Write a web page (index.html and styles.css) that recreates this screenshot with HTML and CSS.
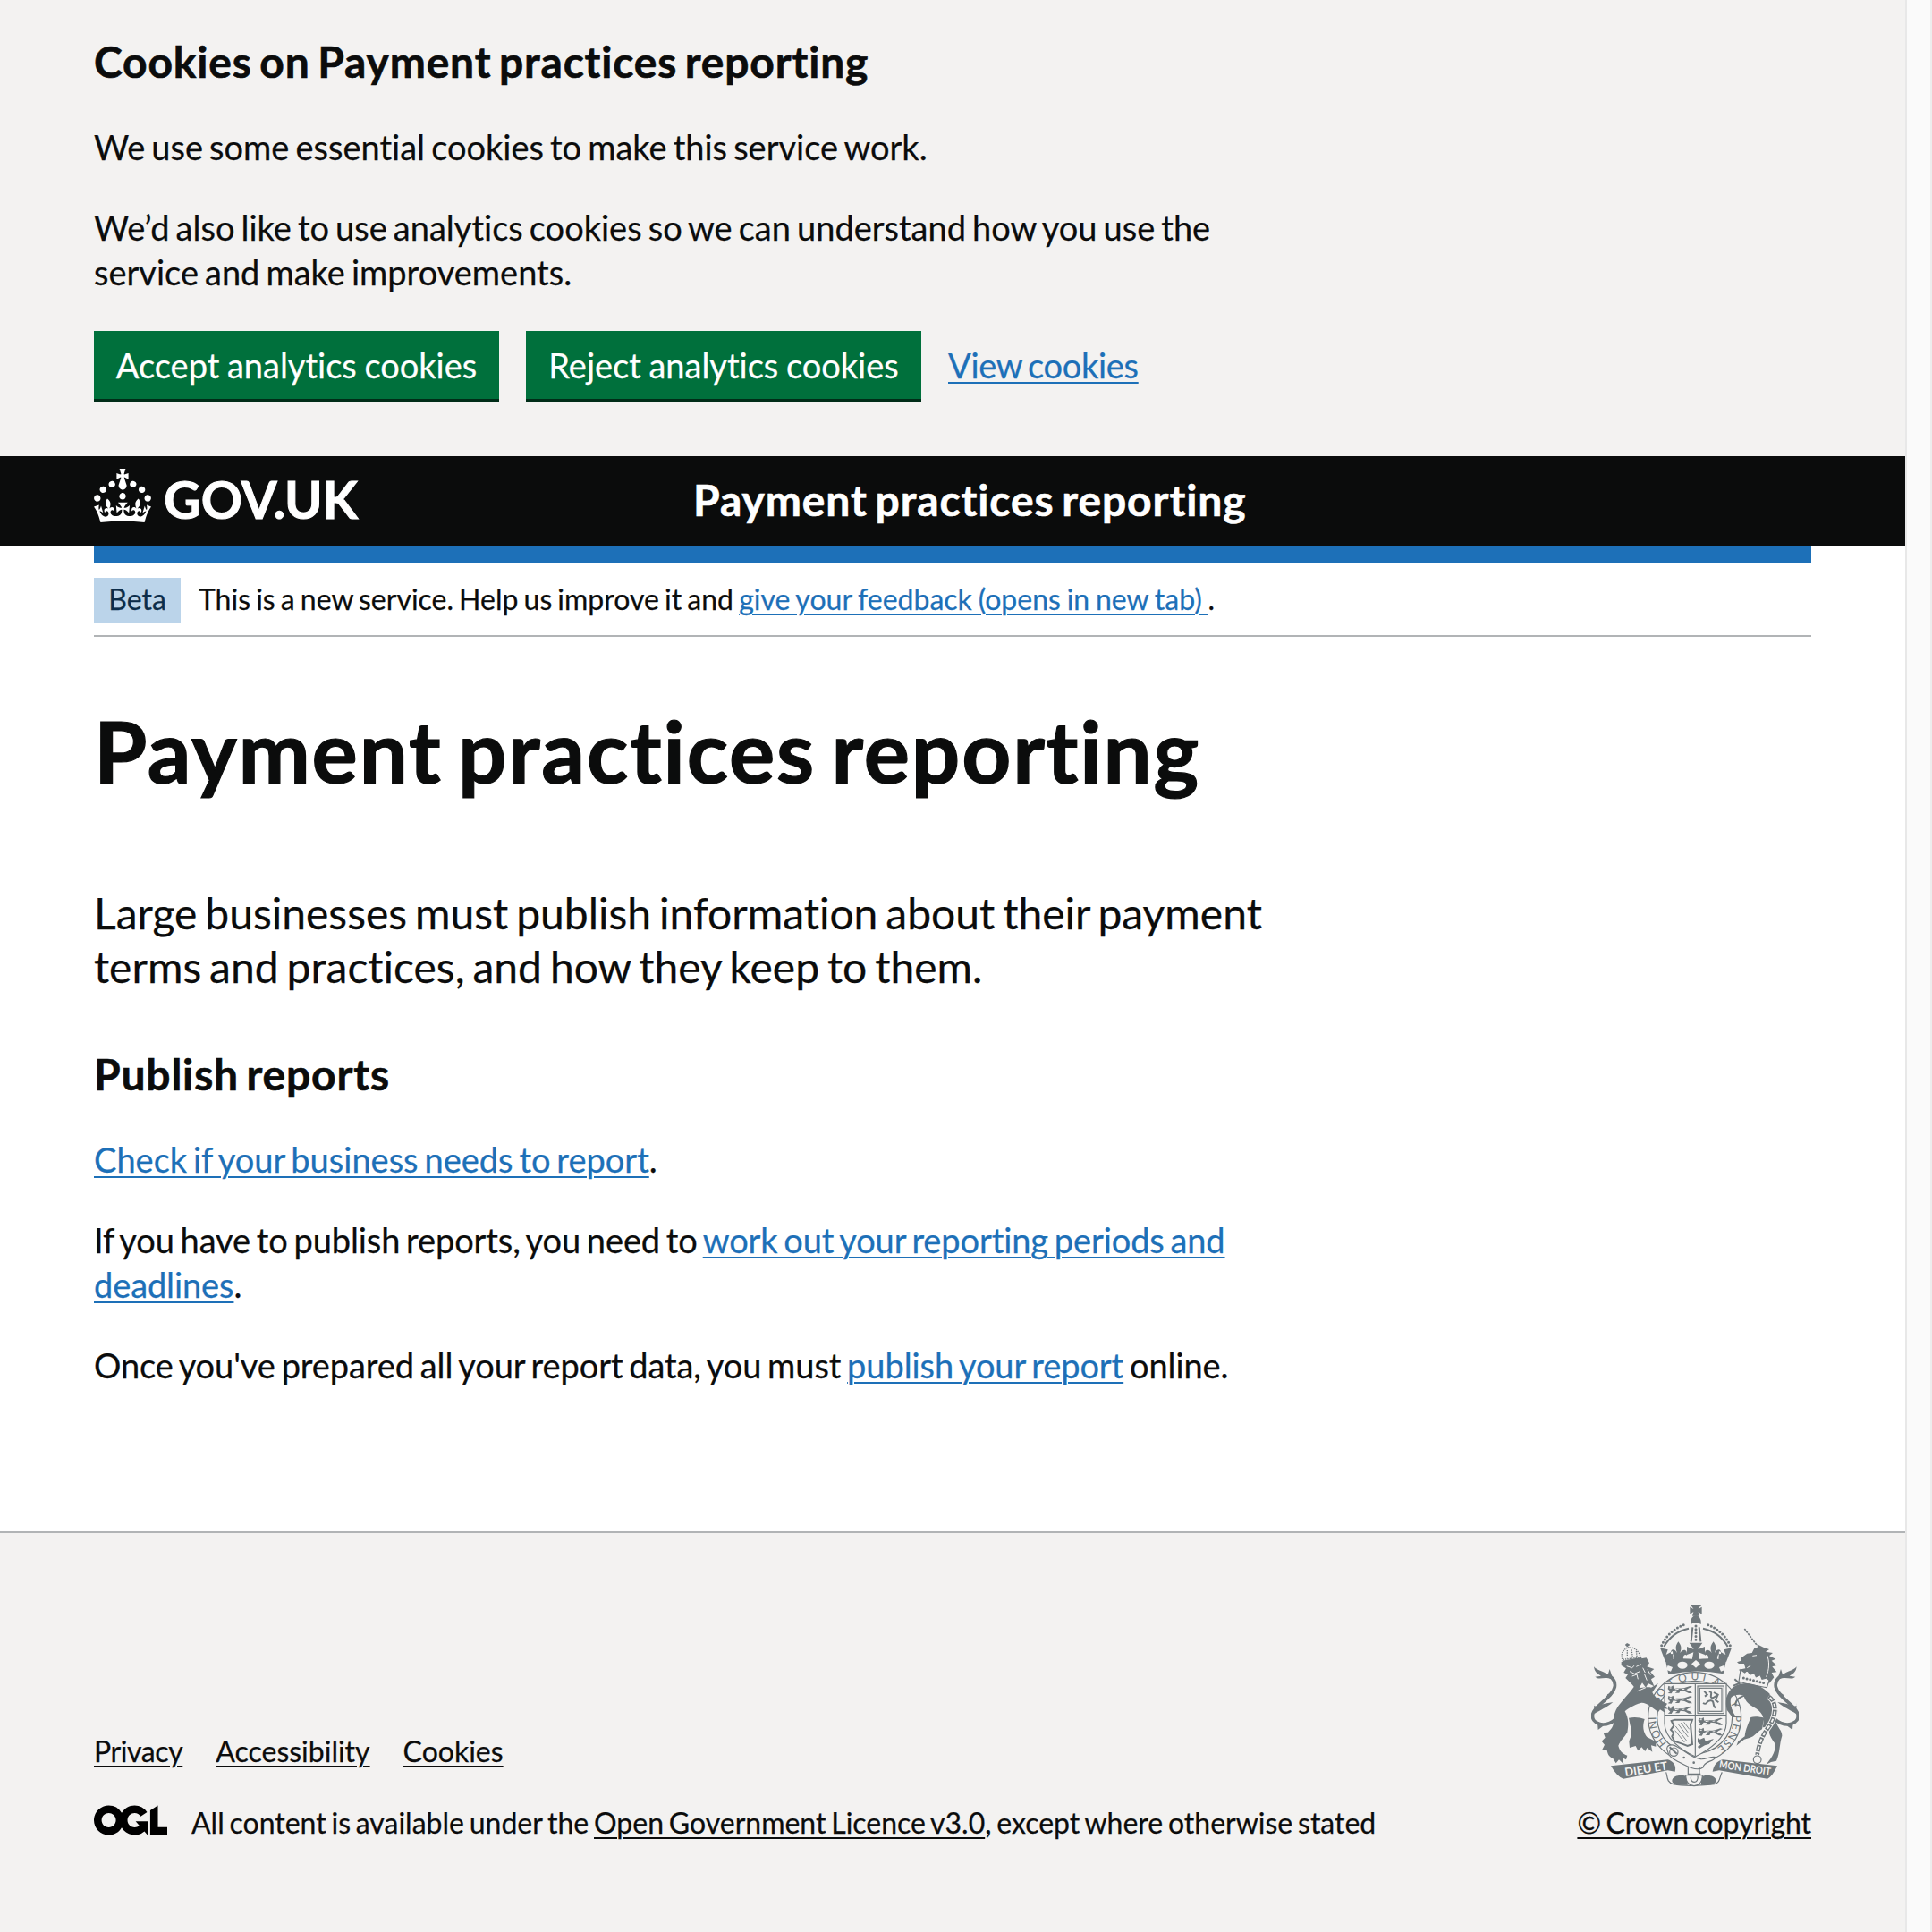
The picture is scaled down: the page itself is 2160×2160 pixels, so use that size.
FILE: index.html
```html
<!DOCTYPE html>
<html lang="en">
<head>
<meta charset="utf-8">
<title>Payment practices reporting</title>
<link rel="stylesheet" href="styles.css">
</head>
<body>
<div class="page">
  <section class="cookie-banner">
    <div class="container">
      <h2 class="heading-m">Cookies on Payment practices reporting</h2>
      <p class="body t-essential">We use some essential cookies to make this service work.</p>
      <p class="body t-analytics">We’d also like to use analytics cookies so we can understand how you use the service and make improvements.</p>
      <div class="button-group">
        <button class="button accept">Accept analytics cookies</button>
        <button class="button reject">Reject analytics cookies</button>
        <a class="link view" href="#">View cookies</a>
      </div>
    </div>
  </section>

  <header class="header">
    <div class="container header-row">
      <a class="logo" href="#">
        <svg class="crown" viewBox="0 0 32 30"><path d="M22.6 10.4c-1 .4-2-.1-2.4-1-.4-.9.1-2 1-2.4.9-.4 2 .1 2.4 1s-.1 2-1 2.4m-5.9 6.7c-.9.4-2-.1-2.4-1-.4-.9.1-2 1-2.4.9-.4 2 .1 2.4 1s-.1 2-1 2.4m10.8-3.7c-1 .4-2-.1-2.4-1-.4-.9.1-2 1-2.4.9-.4 2 .1 2.4 1s0 2-1 2.4m3.3 4.8c-1 .4-2-.1-2.4-1-.4-.9.1-2 1-2.4.9-.4 2 .1 2.4 1s-.1 2-1 2.4M17 4.7l2.3 1.2V2.5l-2.3.7-.2-.2.9-3h-3.4l.9 3-.2.2c-.1.1-2.3-.7-2.3-.7v3.4L15 4.7c.1.1.1.2.2.2l-1.3 4c-.1.2-.1.4-.1.6 0 1.1.8 2 1.9 2.2h.7c1-.2 1.9-1.1 1.9-2.1 0-.2 0-.4-.1-.6l-1.3-4c-.1-.2 0-.2.1-.3m-7.6 5.7c.9.4 2-.1 2.4-1 .4-.9-.1-2-1-2.4-.9-.4-2 .1-2.4 1s0 2 1 2.4m-5 3c.9.4 2-.1 2.4-1 .4-.9-.1-2-1-2.4-.9-.4-2 .1-2.4 1s.1 2 1 2.4m-3.2 4.8c.9.4 2-.1 2.4-1 .4-.9-.1-2-1-2.4-.9-.4-2 .1-2.4 1s0 2 1 2.4m14.8 11c4.4 0 8.6.3 12.3.8 1.1-4.5 2.4-7 3.7-8.8l-2.5-.9c.2 1.3.3 1.9 0 2.7-.4-.4-.8-1.1-1.1-2.3l-1.2 4c.7-.5 1.3-.8 2-.9-1.1 2.5-2.6 3.1-3.5 3-1.1-.2-1.7-1.2-1.5-2.1.3-1.2 1.5-1.5 2.1-.1 1.1-2.3-.8-3-2-2.3 1.9-1.9 2.1-3.5.6-5.6-2.1 1.6-2.1 3.2-1.2 5.5-1.2-1.4-3.2-.6-2.5 1.6.9-1.4 2.1-.5 1.9.8-.2 1.1-1.7 2.1-3.5 1.9-2.7-.2-2.9-2.1-2.9-3.6.7-.1 1.9.5 2.9 1.9l.4-4.3c-1.1 1.1-2.1 1.4-3.2 1.4.4-1.2 2.1-3 2.1-3h-5.4s1.7 1.9 2.1 3c-1.1 0-2.1-.2-3.2-1.4l.4 4.3c1-1.4 2.2-2 2.9-1.9-.1 1.5-.2 3.4-2.9 3.6-1.9.2-3.4-.8-3.5-1.9-.2-1.3 1-2.2 1.9-.8.7-2.3-1.2-3-2.5-1.6.9-2.2.9-3.9-1.2-5.5-1.5 2-1.3 3.7.6 5.6-1.2-.7-3.1 0-2 2.3.6-1.4 1.8-1.1 2.1.1.2.9-.3 1.9-1.5 2.1-.9.2-2.4-.5-3.5-3 .6 0 1.2.3 2 .9l-1.2-4c-.3 1.1-.7 1.9-1.1 2.3-.3-.8-.2-1.4 0-2.7l-2.9.9C1.3 23 2.6 25.5 3.7 30c3.7-.5 7.9-.8 12.3-.8"/></svg>
        <svg class="wordmark" viewBox="0 0 220 72"><text x="-1" y="56" textLength="217" lengthAdjust="spacingAndGlyphs">GOV.UK</text></svg>
      </a>
      <a class="service-name" href="#">Payment practices reporting</a>
    </div>
  </header>

  <div class="container">
    <div class="blue-bar"></div>
    <div class="phase-banner">
      <strong class="tag">Beta</strong>
      <span class="phase-text">This is a new service. Help us improve it and <a class="link" href="#">give your feedback (opens in new tab)&nbsp;</a>.</span>
    </div>
    <main class="main">
      <h1 class="heading-xl">Payment practices reporting</h1>
      <p class="lead">Large businesses must publish information about their payment terms and practices, and how they keep to them.</p>
      <h2 class="heading-m publish">Publish reports</h2>
      <p class="body t-check"><a class="link" href="#">Check if your business needs to report</a>.</p>
      <p class="body t-periods">If you have to publish reports, you need to <a class="link" href="#">work out your reporting periods and deadlines</a>.</p>
      <p class="body t-online">Once you've prepared all your report data, you must <a class="link" href="#">publish your report</a> online.</p>
    </main>
  </div>

  <footer class="footer">
    <div class="container footer-row">
      <div class="footer-main">
        <nav class="footer-links">
          <a class="privacy" href="#">Privacy</a>
          <a href="#">Accessibility</a>
          <a href="#">Cookies</a>
        </nav>
        <div class="licence">
          <svg class="ogl" viewBox="0 0 483.2 195.7"><path d="M421.5 142.8V.1l-50.7 32.3v161.1h112.4v-50.7zm-122.3-9.6A47.12 47.12 0 0 1 221 97.8c0-26 21.1-47.1 47.1-47.1 16.7 0 31.4 8.7 39.7 21.8l42.7-27.2A97.63 97.63 0 0 0 268.1 0c-36.5 0-68.3 20.1-85.1 49.7A98 98 0 0 0 97.8 0C43.9 0 0 43.9 0 97.8s43.9 97.8 97.8 97.8c36.5 0 68.3-20.1 85.1-49.7a97.76 97.76 0 0 0 149.6 25.4l19.4 22.2h3v-87.8h-80l24.3 27.5zM97.8 145c-26 0-47.1-21.1-47.1-47.1s21.1-47.1 47.1-47.1 47.1 21.1 47.1 47.1S123.8 145 97.8 145"/></svg>
          <span class="licence-text">All content is available under the <a href="#">Open Government Licence v3.0</a>, except where otherwise stated</span>
        </div>
      </div>
      <div class="copyright">
        <svg class="arms" viewBox="117 72 696 612">
          <defs>
            <g id="half-crown">
              <path class="beads" d="M353 209Q376 158 437 136"/>
              <path class="line6" d="M361 213Q388 164 444 152M457 148L452 196"/>
              <path d="M348 217L374 223L368 240L390 228L392 254L366 264ZM409 196C396 214 402 224 405 234C394 216 382 222 384 238C393 234 397 244 396 258H426C424 242 430 236 438 242C440 222 426 218 415 234C419 222 422 212 409 196Z"/>
            </g>
            <g id="tail">
              <path class="line12" d="M200 456C160 490 116 470 122 440C126 412 188 385 196 348C200 322 180 308 160 308"/>
              <path d="M126 280C138 296 165 292 186 322C160 312 144 326 130 314L150 311C134 302 128 296 126 280ZM179 288L190 322L172 310ZM126 402C124 424 140 406 190 399C168 418 150 424 128 438ZM140 492L138 466L164 474ZM172 372L192 368L166 394Z"/>
            </g>
            <g id="passant">
              <path d="M6 2L14 6L22 1L24 12C36 9 50 12 60 9L78 3L86 5L72 11L66 16L78 20L86 27H74L60 20L46 18L42 26H28L36 20L22 18L16 28L4 27L12 21L4 13Z"/>
              <path class="cut" d="M10 9H16M28 15L40 13M52 14L60 13"/>
            </g>
            <path id="garter" d="M464 575A130 125 0 0 1 464 325A130 125 0 0 1 464 575"/>
          </defs>

          <path d="M450 72H486L476 87L488 80V104L476 96L480 110H456L460 96L448 104V80L460 87Z"/>
          <path d="M451 138C448 118 460 108 468 108C476 108 488 118 485 138L474 132H462Z"/>
          <use href="#half-crown"/>
          <use href="#half-crown" transform="translate(936 0) scale(-1 1)"/>
          <path class="beads" d="M468 144V196"/>
          <path d="M446 200H490L475 222L498 213V240L476 232L482 262H454L460 232L438 240V213L461 222Z"/>
          <path d="M366 258Q416 248 468 256Q520 248 570 258L560 304Q468 286 376 306Z"/>
          <path class="paper" d="M406 275a17 12 0 1 0 34 0a17 12 0 1 0 -34 0M496 275a17 12 0 1 0 34 0a17 12 0 1 0 -34 0M468 258L483 271L468 284L453 271ZM374 276L390 282L384 296L368 290ZM562 276L546 282L552 296L568 290Z"/>

          <ellipse class="paper ring" cx="464" cy="450" rx="156" ry="151"/>
          <ellipse class="thin" cx="464" cy="450" rx="126" ry="122"/>
          <g class="motto">
            <text><textPath href="#garter" startOffset="104" textLength="98">HONI</textPath></text>
            <text><textPath href="#garter" startOffset="248">SO</textPath></text>
            <text><textPath href="#garter" startOffset="314">T</textPath></text>
            <text><textPath href="#garter" startOffset="348" textLength="88">QUI</textPath></text>
            <text><textPath href="#garter" startOffset="458">A</textPath></text>
            <text><textPath href="#garter" startOffset="548">Y</textPath></text>
            <text><textPath href="#garter" startOffset="594" textLength="128">PENSE</textPath></text>
          </g>

          <path class="paper thin" d="M363 337H570V470C570 520 510 560 466 582C420 560 363 520 363 470Z"/>
          <path class="thin" d="M466 337V580M363 443H570"/>
          <use href="#passant" x="370" y="342"/>
          <use href="#passant" x="370" y="376"/>
          <use href="#passant" x="370" y="410"/>
          <use href="#passant" x="472" y="449"/>
          <use href="#passant" x="472" y="484"/>
          <path d="M474 520L482 524L496 518L500 530L528 522L512 540L498 544L478 556L474 548L484 542L474 534Z"/>
          <rect class="thin" x="474" y="345" width="88" height="92"/>
          <rect class="thin" x="481" y="352" width="74" height="78"/>
          <path class="line6" d="M496 362L506 374L498 380M512 364C530 362 508 388 526 384L540 376M492 402C510 412 500 390 520 394C532 396 522 412 534 418M528 366L542 374L534 392L544 400"/>
          <path class="line6" d="M386 462L398 458H456L450 474L456 540L440 546L420 538L396 530L388 514L394 502L384 492L394 478Z"/>
          <path class="hair" d="M400 480L438 530M408 472L442 516M418 468L444 504M428 466L446 490M398 494L430 534"/>

          <path class="paper thin" d="M372 560C366 542 390 538 404 548C430 560 450 586 484 590C500 592 520 580 534 584C526 600 496 596 492 618C470 634 430 610 404 596C388 588 376 580 372 560Z"/>
          <circle class="thin" cx="394" cy="566" r="14"/>
          <path class="line6" d="M380 550L404 572"/>
          <path d="M424 585a4 4 0 1 0 8 0a4 4 0 1 0 -8 0M457 602a4 4 0 1 0 8 0a4 4 0 1 0 -8 0"/>

          <path d="M262 345C280 358 300 345 318 350L342 336L322 366C330 385 350 395 372 404L366 414L374 422L360 420L366 436L348 424L342 432C320 418 300 398 283 402C262 408 240 420 230 430C244 455 242 480 238 500C230 515 214 528 208 545C212 562 222 572 238 578L234 592L222 586L226 607L210 592L200 604L190 588C176 582 172 572 170 560L154 558L162 542L152 530L164 518L158 502L174 500C184 490 192 480 192 466C190 450 196 430 208 412C225 388 245 370 262 345Z"/>
          <path d="M243 452C262 448 280 450 296 456C288 480 292 500 304 516L334 532V548L318 544L322 566L304 552L298 564L286 550L274 562L266 546L246 552L244 530C254 510 254 490 248 478Z"/>
          <path d="M218 264L302 250L312 268L304 280L328 288L316 298L330 314L318 322L328 346L308 336L300 350L288 334L272 362L254 340L232 318L240 306L226 300L234 286L218 276Z"/>
          <path class="cut" d="M236 278L254 284L262 276M268 280L284 272M246 296L262 304L280 296M254 312L270 306L274 322M290 284L298 300M296 306L304 326M306 290L316 308M272 362L300 350"/>
          <path class="dotted" d="M224 262C212 236 226 222 240 216C256 212 280 224 284 256M224 256L284 248M238 250V222M256 248L252 222M270 246L268 224"/>
          <path class="line6" d="M238 202V214M232 207H245M222 263L286 251"/>
          <use href="#tail"/>
          <use href="#tail" transform="translate(932 0) scale(-1 1)"/>

          <path class="horn" d="M631 153L674 210"/>
          <path d="M606 265L620 260L618 252L640 236L656 234L664 218L678 214L672 204L696 216L714 222L702 230L726 234L714 244L736 254L722 260L739 276L724 280L739 298L722 300L730 316L714 336L690 320L668 318L620 300L612 290L634 286L630 270L612 270Z"/>
          <path class="cut" d="M658 244L672 242M706 240C716 262 714 290 704 314M640 284L652 276"/>
          <path class="paper thin" d="M618 290L632 300L640 292L650 306L664 302L670 314L684 308L690 322L706 318L714 326L706 350C672 344 640 340 612 330Z"/>
          <path class="beads" d="M628 318L700 336"/>
          <path class="line6" d="M598 322L614 336L594 344"/>
          <path d="M594 348C630 328 655 338 680 345C712 360 742 395 742 430C732 450 722 470 706 482L692 484C702 452 690 430 660 415C640 404 632 390 628 376C612 372 595 374 586 384C582 400 584 420 600 445L592 452L572 425C566 400 568 368 594 348Z"/>
          <path class="line6" d="M640 374C620 380 598 388 602 412"/>
          <path d="M652 450C664 446 684 448 697 452L690 490C672 500 664 515 650 518L630 524L604 545L610 530L632 514C634 490 645 470 652 450Z"/>
          <path d="M736 440C730 480 758 488 757 512C748 540 750 570 738 596L720 600L704 608C726 580 738 560 732 536C714 510 708 500 720 470Z"/>
          <path class="chain-back" d="M712 380C744 400 736 450 712 482C692 510 678 540 674 576"/>
          <path class="chain" d="M712 380C744 400 736 450 712 482C692 510 678 540 674 576"/>
          <path class="chain-hole" d="M712 380C744 400 736 450 712 482C692 510 678 540 674 576"/>
          <circle class="thin ring-end" cx="674" cy="592" r="13"/>

          <path d="M183 613L374 592C392 598 404 612 398 632L374 628L225 656Q204 650 183 613Z"/>
          <path d="M741 613L558 592C536 598 528 612 524 632L546 628L708 656Q724 650 741 613Z"/>
          <path class="thin" d="M368 634C374 650 368 666 392 674Q440 684 530 674C552 668 546 650 556 634M442 616V640M480 618V640M440 640H484"/>
          <path d="M388 664C388 640 436 640 440 652V677C410 678 392 678 388 664ZM536 664C536 640 490 640 486 652V677C514 678 530 678 536 664Z"/>
          <path class="paper thin" d="M434 644H490C490 692 434 692 434 644Z"/>
          <path class="thin" d="M452 646C444 674 480 674 474 646"/>
          <text class="scroll-text" transform="translate(232 648) rotate(-9)" textLength="144" lengthAdjust="spacingAndGlyphs">DIEU ET</text>
          <text class="scroll-text small" transform="translate(545 619) rotate(8.5)" textLength="174" lengthAdjust="spacingAndGlyphs">MON DROIT</text>
        </svg>
        <a class="crown-copyright" href="#">© Crown copyright</a>
      </div>
    </div>
  </footer>
</div>
<div class="scrollbar"></div>
</body>
</html>
```

FILE: styles.css
```css
* { box-sizing: border-box; }

body {
  margin: 0;
  display: flex;
  height: 2160px;
  overflow: hidden;
  font-family: Lato, "Noto Sans", sans-serif;
  font-size: 38px;
  line-height: 50px;
  color: #0b0c0c;
  background: #fff;
  font-variant-ligatures: none;
  -webkit-text-stroke: 0.25px currentColor;
}

h1, h2, p { margin: 0; }

.page {
  width: 2130px;
  flex: none;
  display: flex;
  flex-direction: column;
}

.scrollbar {
  flex: 1;
  background: #fafafa;
  border-left: 2px solid #e8e8e8;
  border-right: 2px solid #ededed;
}

.container { width: 1920px; margin: 0 auto; }

.cookie-banner {
  height: 510px;
  flex: none;
  padding-top: 39px;
  background: #f3f2f1;
}

.heading-m {
  font-size: 48px;
  line-height: 60px;
  font-weight: 700;
  letter-spacing: 0.017em;
  word-spacing: -0.08em;
  -webkit-text-stroke-width: 0.6px;
  margin-bottom: 40px;
}

.body { margin-bottom: 40px; max-width: 1320px; word-spacing: -0.075em; }
.t-essential { word-spacing: -0.07em; }
.t-analytics { max-width: 1290px; word-spacing: -0.07em; }
.t-periods { letter-spacing: -0.1px; }
.t-online { letter-spacing: -0.08px; }

.link {
  color: #1d70b8;
  text-decoration: underline;
  text-decoration-thickness: 2px;
  text-underline-offset: 4px;
}

.button-group {
  display: flex;
  align-items: flex-start;
  gap: 30px;
  padding-top: 1px;
}

.button {
  height: 80px;
  padding: 0 0 4px;
  border: 0;
  box-shadow: inset 0 -4px 0 #002d18;
  background: #00703c;
  color: #fff;
  font: inherit;
  text-align: center;
  word-spacing: -0.03em;
  font-variant-ligatures: none;
  -webkit-text-stroke: inherit;
}

.accept { width: 453px; }
.reject { width: 442px; }
.view { line-height: 76px; word-spacing: -0.08em; letter-spacing: -0.3px; }

.header { height: 100px; flex: none; background: #0b0c0c; }
.header-row { display: flex; height: 100px; }
.logo { display: flex; align-items: flex-start; width: 670px; padding-top: 14px; }
.crown { width: 64px; height: 60px; fill: #fff; }
.wordmark { width: 220px; height: 72px; margin-left: 15px; overflow: visible; }
.wordmark text { font-family: Lato, sans-serif; font-weight: 700; font-size: 58px; fill: #fff; stroke: #fff; stroke-width: 1; }

.service-name {
  color: #fff;
  text-decoration: none;
  font-size: 48px;
  font-weight: 700;
  line-height: 98px;
  letter-spacing: 0.019em;
  word-spacing: -0.08em;
  -webkit-text-stroke-width: 0.6px;
}

.blue-bar { height: 20px; background: #1d70b8; }

.phase-banner {
  display: flex;
  align-items: flex-start;
  gap: 20px;
  height: 82px;
  padding-top: 16px;
  border-bottom: 2px solid #b1b4b6;
  font-size: 32px;
  line-height: 48px;
}

.phase-text { word-spacing: -0.065em; }
.phase-text .link { word-spacing: -0.045em; }

.tag {
  width: 97px;
  height: 50px;
  background: #bbd4ea;
  color: #0c2d4a;
  font-weight: 400;
  text-align: center;
}

.main { padding-top: 77px; height: 1000px; }

.heading-xl {
  font-size: 96px;
  line-height: 100px;
  font-weight: 700;
  letter-spacing: 0.019em;
  word-spacing: -0.08em;
  -webkit-text-stroke-width: 1.2px;
  margin-bottom: 102px;
}

.lead { font-size: 48px; line-height: 60px; max-width: 1330px; word-spacing: -0.07em; margin-bottom: 60px; }

.footer {
  flex: 1;
  background: #f3f2f1;
  border-top: 2px solid #b1b4b6;
  font-size: 32px;
  line-height: 40px;
}

.footer a {
  color: inherit;
  text-decoration: underline;
  text-decoration-thickness: 2px;
  text-underline-offset: 4px;
}

.footer-row { display: flex; justify-content: space-between; align-items: flex-end; height: 344px; }
.footer-links { display: flex; gap: 37px; margin-bottom: 40px; }
.privacy { letter-spacing: -0.4px; }
.licence { display: flex; word-spacing: -0.075em; }
.ogl { width: 82px; height: 34px; margin-right: 27px; }

.copyright { display: flex; flex-direction: column; align-items: flex-end; }
.crown-copyright { word-spacing: -0.08em; letter-spacing: -0.1px; }

.arms { width: 232px; height: 204px; margin: 0 14px 20px 0; fill: #6f777b; -webkit-text-stroke: 0; }
.arms .paper { fill: #f3f2f1; }
.arms .ring, .arms .thin { stroke: #6f777b; stroke-width: 3.5; }
.arms .thin:not(.paper) { fill: none; }
.arms .line6 { fill: none; stroke: #6f777b; stroke-width: 6; }
.arms .line12 { fill: none; stroke: #6f777b; stroke-width: 11; }
.arms .hair { fill: none; stroke: #6f777b; stroke-width: 2.5; }
.arms .cut { fill: none; stroke: #f3f2f1; stroke-width: 3; }
.arms .beads { fill: none; stroke: #6f777b; stroke-width: 9; stroke-linecap: round; stroke-dasharray: 0 11.5; }
.arms .dotted { fill: none; stroke: #6f777b; stroke-width: 4; stroke-dasharray: 4 3; }
.arms .horn { fill: none; stroke: #6f777b; stroke-width: 5; stroke-dasharray: 7 3; }
.arms .chain-back { fill: none; stroke: #f3f2f1; stroke-width: 20; }
.arms .chain { fill: none; stroke: #6f777b; stroke-width: 14; stroke-dasharray: 22 4; }
.arms .chain-hole { fill: none; stroke: #f3f2f1; stroke-width: 6; stroke-dasharray: 12 14; stroke-dashoffset: -5; }
.motto text { font-family: Lato, sans-serif; font-size: 36px; }
.arms .scroll-text { font-family: Lato, sans-serif; font-weight: 700; font-size: 39px; fill: #f3f2f1; }
.arms .small { font-size: 35px; }
```
